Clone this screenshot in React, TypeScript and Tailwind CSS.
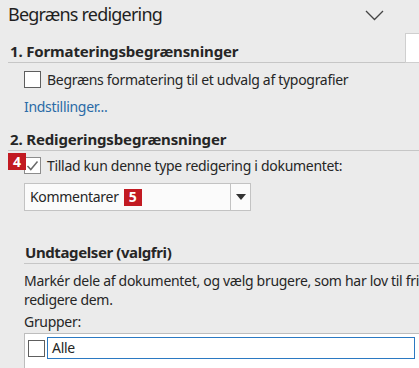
import React from "react";

function Badge({ n }: { n: string }) {
  return (
    <span className="flex h-[17px] w-[18px] items-center justify-center bg-[#c21a22] text-[14px] font-bold leading-none tracking-normal text-white">
      {n}
    </span>
  );
}

export default function App() {
  return (
    <div className="relative h-[368px] w-[419px] overflow-hidden bg-[#ebebeb] text-[#262626] [font-family:'Noto_Sans',sans-serif]">
      <div className="w-[460px] pl-2">
        {/* Title */}
        <div className="flex h-[28px] w-[411px] items-center">
          <div className="text-[18px] leading-none tracking-[-0.8px] text-[#1f1f1f]">Begræns redigering</div>
          <svg className="ml-auto mr-[35px] mt-[2px]" width="19" height="11" viewBox="0 0 19 11">
            <path d="M1 1 L9.5 9.5 L18 1" fill="none" stroke="#444" strokeWidth="1.3" />
          </svg>
        </div>

        {/* Section 1 header */}
        <div className="mt-[5px] flex w-[420px] items-end">
          <div className="flex h-[30px] w-[397px] items-end border-b border-[#c6c6c6] pb-[3px] pl-[2px] text-[15px] font-bold leading-none tracking-[-0.15px]">
            1. Formateringsbegrænsninger
          </div>
          <div className="h-[30px] flex-1 border-l border-t border-b border-[#cfcfcf] bg-white" />
        </div>

        {/* Checkbox 1 */}
        <div className="mt-[8px] flex h-[17px] items-center pl-4">
          <span className="h-[17px] w-[17px] border border-[#5e5e5e] bg-white" />
          <span className="ml-[6px] text-[14px] leading-none tracking-[-0.3px]">Begræns formatering til et udvalg af typografier</span>
        </div>

        <div className="mt-[12px] pl-4 text-[14px] leading-none tracking-[-0.3px] text-[#2a6aa6]">Indstillinger...</div>

        {/* Section 2 header */}
        <div className="mt-[17px] flex h-[20px] w-[420px] items-end border-b border-[#c6c6c6] pb-[3px] pl-[2px] text-[15px] font-bold leading-none tracking-[-0.15px]">
          2. Redigeringsbegrænsninger
        </div>

        {/* Checkbox 2 */}
        <div className="relative mt-[6px] flex h-[17px] items-center pl-4">
          <span className="relative flex h-[17px] w-[17px] items-center justify-center border border-[#8c8c8c] bg-white">
            <svg width="13" height="11" viewBox="0 0 13 11">
              <path d="M1.5 6 L4.8 9.5 L11.5 1.5" fill="none" stroke="#6a6a6a" strokeWidth="1.5" />
            </svg>
          </span>
          <span className="ml-[6px] text-[14px] leading-none tracking-[-0.3px]">Tillad kun denne type redigering i dokumentet:</span>
          <div className="absolute left-0 top-[-4px]">
            <Badge n="4" />
          </div>
        </div>

        {/* Dropdown */}
        <div className="ml-4 mt-[9px] flex h-[28px] w-[227px] border border-[#c3c3c3] bg-[#fbfbfb]">
          <div className="flex flex-1 items-center gap-[5px] pl-[5px] text-[14px] leading-none tracking-[-0.3px]">
            Kommentarer
            <Badge n="5" />
          </div>
          <div className="flex w-[20px] items-center justify-center border-l border-[#c3c3c3]">
            <svg width="10" height="6" viewBox="0 0 10 6">
              <path d="M0 0 H10 L5 6 Z" fill="#333" />
            </svg>
          </div>
        </div>

        {/* Undtagelser */}
        <div className="ml-4 mt-[33px] flex h-[20px] w-[420px] items-end border-b border-[#c6c6c6] pb-[3px] pl-[1px] text-[15px] font-bold leading-none tracking-[-0.4px]">
          Undtagelser (valgfri)
        </div>

        <div className="ml-4 mt-[7px] text-[14px] leading-[19px] tracking-[-0.3px]">
          <span className="whitespace-nowrap">Markér dele af dokumentet, og vælg brugere, som har lov til frit at</span>
          <br />
          redigere dem.
        </div>

        <div className="ml-4 mt-[3px] text-[14px] leading-[19px] tracking-[-0.3px]">Grupper:</div>

        {/* List box */}
        <div className="ml-4 mt-[2px] h-[60px] w-[420px] border-l border-t border-[#bdbdbd] bg-white pl-[3px] pt-[3px]">
          <div className="flex items-center">
            <span className="h-[17px] w-[17px] border border-[#5e5e5e] bg-white" />
            <div className="ml-[2px] flex h-[22px] w-[368px] items-center border border-[#2b79c2] pl-[4px] text-[14px] leading-none tracking-[-0.3px]">
              Alle
            </div>
          </div>
        </div>
      </div>
    </div>
  );
}
